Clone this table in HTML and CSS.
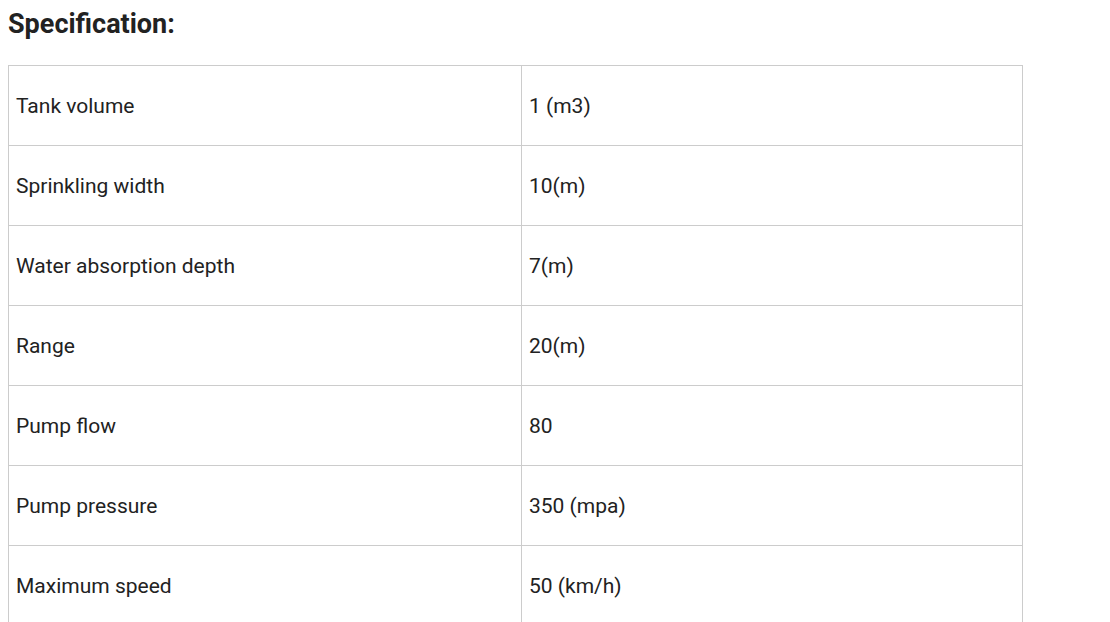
FILE: index.html
```html
<!DOCTYPE html>
<html>
<head>
<meta charset="utf-8">
<link rel="stylesheet" href="styles.css">
</head>
<body>
<h2 class="title">Specification:</h2>
<table class="spec">
<tbody>
<tr><td class="key">Tank volume</td><td>1 (m3)</td></tr>
<tr><td class="key">Sprinkling width</td><td>10(m)</td></tr>
<tr><td class="key">Water absorption depth</td><td>7(m)</td></tr>
<tr><td class="key">Range</td><td>20(m)</td></tr>
<tr><td class="key">Pump flow</td><td>80</td></tr>
<tr><td class="key">Pump pressure</td><td>350 (mpa)</td></tr>
<tr><td class="key">Maximum speed</td><td>50 (km/h)</td></tr>
</tbody>
</table>
</body>
</html>
```
FILE: styles.css
```css
html, body { margin: 0; padding: 0; background: #fff; }
body { padding: 0 8px; font-family: Roboto, "Liberation Sans", sans-serif; color: #222; }
.title { font-size: 27px; font-weight: 700; margin: 8px 0 0; line-height: 32px; }
.spec { border-collapse: collapse; width: 1015px; margin-top: 25px; font-size: 21px; color: #222; }
.spec td { border: 1px solid #ccc; height: 80px; padding: 0 7px; box-sizing: border-box; vertical-align: middle; }
.spec td.key { width: 513px; }
```
